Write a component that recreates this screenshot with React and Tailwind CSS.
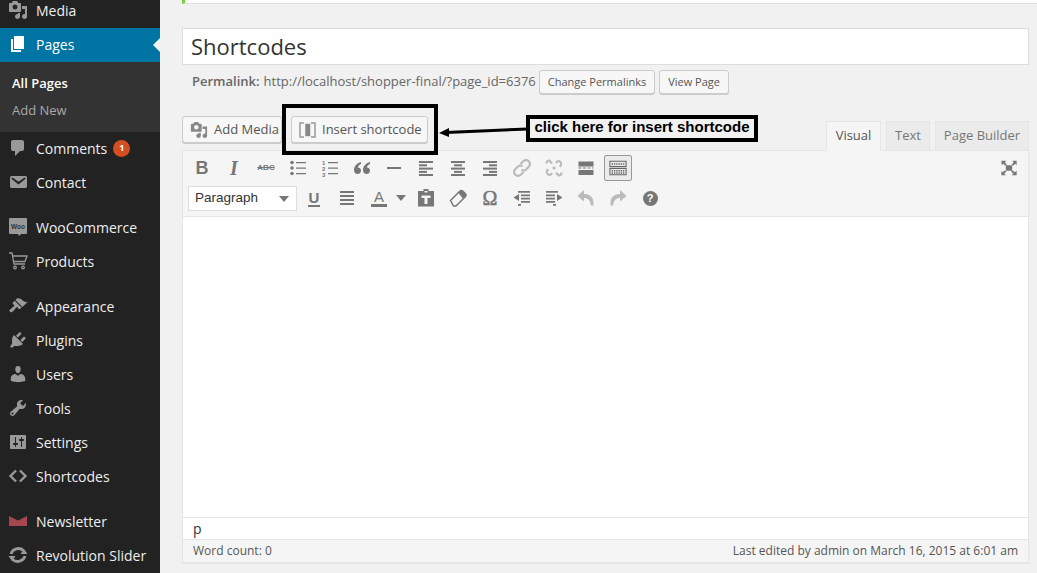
import React from "react";

const D = ({ d, className = "w-5 h-5 fill-[#999]" }) => (
  <svg viewBox="0 0 20 20" className={className}><path d={d} /></svg>
);

const paths = {
  media: "M13 11V4c0-.55-.45-1-1-1h-1.67L9 1H5L3.67 3H2c-.55 0-1 .45-1 1v7c0 .55.45 1 1 1h10c.55 0 1-.45 1-1zM7 4.500c1.380 0 2.500 1.120 2.500 2.500S8.380 9.500 7 9.500 4.500 8.380 4.500 7 5.620 4.500 7 4.500zM14 6h5v10.500c0 1.380-1.120 2.500-2.500 2.500S14 17.880 14 16.500s1.120-2.500 2.500-2.500c.17 0 .34.020.5.050V9h-3V6zm-4 8.050V13h2v3.500c0 1.380-1.120 2.500-2.500 2.500S7 17.880 7 16.500 8.120 14 9.500 14c.17 0 .34.020.5.050z",
  pages: "M6 15V2h10v13H6zm-1 1h8v2H3V5h2v11z",
  comments: "M5 2h9c1.100 0 2 .9 2 2v7c0 1.100-.9 2-2 2h-2l-5 5v-5H5c-1.100 0-2-.9-2-2V4c0-1.100.9-2 2-2z",
  contact: "M3.870 4h13.250C18.370 4 19 4.590 19 5.790v8.420c0 1.190-.63 1.790-1.880 1.790H3.870c-1.250 0-1.880-.6-1.880-1.790V5.790c0-1.200.63-1.790 1.880-1.790zm6.620 8.600l6.740-5.530c.24-.2.43-.66.13-1.070-.29-.41-.82-.42-1.170-.17l-5.700 3.860L4.800 5.830c-.35-.25-.88-.24-1.170.17-.3.410-.11.870.13 1.070z",
  appearance: "M14.480 11.060L7.410 3.990l1.500-1.500c.5-.56 2.300-.47 3.510.32 1.210.8 1.430 1.280 2.910 2.100 1.180.64 2.450 1.260 4.450.85zm-.71.71L6.700 4.700 4.930 6.470c-.39.39-.39 1.020 0 1.410l1.060 1.060c.39.39.39 1.030 0 1.420-.6.6-1.430 1.110-2.210 1.690-.35.26-.7.53-1.010.84C1.430 13.230.91 14.660 1.910 15.660c.99 1 2.420.48 3.770-.85.31-.31.58-.66.84-1.010.58-.78 1.090-1.610 1.690-2.210.39-.39 1.020-.39 1.410 0l1.060 1.060c.39.39 1.020.39 1.410 0z",
  plugins: "M13.110 4.360L9.870 7.600 8 5.730l3.240-3.240c.35-.34 1.050-.2 1.560.32.52.51.66 1.210.31 1.550zm-8 1.770l.91-1.120 9.010 9.010-1.190.84c-.71.71-2.630 1.160-3.820 1.160H6.140L4.900 17.260c-.59.59-1.540.59-2.120 0-.59-.58-.59-1.530 0-2.120l1.240-1.240v-3.880c0-1.130.4-3.190 1.090-3.890zm7.260 3.970l3.240-3.240c.34-.35 1.040-.21 1.550.31.52.51.66 1.210.31 1.550l-3.240 3.250z",
  users: "M10 9.250c-2.270 0-2.730-3.440-2.730-3.440C7 4.020 7.820 2 9.970 2c2.160 0 2.980 2.020 2.710 3.810 0 0-.41 3.440-2.680 3.440zm0 2.570L12.720 10c2.390 0 4.520 2.330 4.520 4.530v2.490s-3.650 1.130-7.240 1.130c-3.650 0-7.240-1.130-7.240-1.130v-2.490c0-2.250 1.940-4.480 4.470-4.480z",
  tools: "M16.680 9.770c-1.340 1.340-3.300 1.670-4.950.99l-5.410 6.520c-.99.99-2.590.99-3.580 0s-.99-2.590 0-3.570l6.520-5.420c-.68-1.650-.35-3.610.99-4.950 1.280-1.280 3.120-1.620 4.720-1.060l-2.890 2.890 2.820 2.820 2.860-2.870c.53 1.580.18 3.390-1.080 4.650zM3.810 16.210c.4.39 1.040.39 1.430 0 .4-.4.4-1.040 0-1.430-.39-.4-1.030-.4-1.430 0-.39.39-.39 1.030 0 1.430z",
  settings: "M18 16V4c0-.55-.45-1-1-1H3c-.55 0-1 .45-1 1v12c0 .55.45 1 1 1h14c.55 0 1-.45 1-1zM8 11h1c.55 0 1 .45 1 1s-.45 1-1 1H8v1.500c0 .28-.22.5-.5.5s-.5-.22-.5-.5V13H6c-.55 0-1-.45-1-1s.45-1 1-1h1V5.500c0-.28.22-.5.5-.5s.5.22.5.5V11zm5-2h-1c-.55 0-1-.45-1-1s.45-1 1-1h1V5.500c0-.28.22-.5.5-.5s.5.22.5.5V7h1c.55 0 1 .45 1 1s-.45 1-1 1h-1v5.500c0 .28-.22.5-.5.5s-.5-.22-.5-.5V9z",
};

const Shortcodes = () => (
  <svg viewBox="0 0 20 20" className="w-5 h-5 fill-none stroke-[#999] stroke-[2.400]"><path d="M8 4.500L2.500 10 8 15.500M12 4.500l5.500 5.500L12 15.500" /></svg>
);
const Woo = () => (
  <svg viewBox="0 0 20 20" className="w-5 h-5">
    <path d="M2 1h16a1 1 0 0 1 1 1v14a1 1 0 0 1-1 1h-5l-2 2-1-2H2a1 1 0 0 1-1-1V2a1 1 0 0 1 1-1z" fill="#999" />
    <text x="10" y="11.500" textAnchor="middle" fontSize="6.500" fontWeight="700" fill="#333" fontFamily="'Liberation Sans',sans-serif">Woo</text>
  </svg>
);
const Cart = () => (
  <svg viewBox="0 0 20 20" className="w-5 h-5 fill-none stroke-[#999] stroke-[1.300]">
    <path d="M1 2h3l2 11h11M5 5h14l-2 5.500H6" /><circle cx="7" cy="16.500" r="1.300" /><circle cx="15" cy="16.500" r="1.300" />
  </svg>
);
const Newsletter = () => (
  <svg viewBox="0 0 20 20" className="w-5 h-5"><path d="M1 5l9 4.500L19 5v10H1z" fill="#a5474e" /></svg>
);
const Rev = () => (
  <svg viewBox="0 0 20 20" className="w-5 h-5 fill-none stroke-[#999] stroke-[2.800]">
    <path d="M3 9A7.500 7 0 0 1 15.500 5.500M17 11A7.500 7 0 0 1 4.500 14.500" />
    <path d="M12.500 9h7l-3.500-5zM7.500 11h-7l3.500 5z" className="fill-[#999] stroke-none" />
  </svg>
);

const MenuItem = ({ icon, label, active, children }) => (
  <div className={`h-[34px] flex items-center pl-[8px] pb-[2px] text-[14px] ${active ? "bg-[#0074a2] text-white relative" : "text-[#eeeeee]"}`}>
    <span className="w-[28px] flex shrink-0">{icon}</span>
    <span className="whitespace-nowrap">{label}</span>
    {children}
  </div>
);

const Sidebar = () => (
  <aside className="w-[160px] shrink-0 bg-[#222222] h-full overflow-hidden flex flex-col">
    <div className="-mt-[6px]">
      <MenuItem icon={<D d={paths.media} />} label="Media" />
      <MenuItem active icon={<D d={paths.pages} className="w-5 h-5 fill-white" />} label="Pages">
        <span className="absolute right-0 top-[10px] border-y-[7px] border-y-transparent border-r-[7px] border-r-[#f1f1f1]" />
      </MenuItem>
      <div className="bg-[#333333] h-[70px] pl-[12px] pt-[8px] text-[13px]">
        <div className="h-[27px] leading-[26px] font-semibold text-white">All Pages</div>
        <div className="h-[26px] leading-[26px] text-[#a9a9a9]">Add New</div>
      </div>
      <MenuItem icon={<D d={paths.comments} />} label="Comments">
        <span className="ml-[6px] w-[17px] h-[17px] rounded-full bg-[#d54e21] text-white text-[9px] font-bold flex items-center justify-center">1</span>
      </MenuItem>
      <MenuItem icon={<D d={paths.contact} />} label="Contact" />
      <div className="mt-[11px]">
        <MenuItem icon={<Woo />} label="WooCommerce" />
        <MenuItem icon={<Cart />} label="Products" />
      </div>
      <div className="mt-[11px]">
        <MenuItem icon={<D d={paths.appearance} />} label="Appearance" />
        <MenuItem icon={<D d={paths.plugins} />} label="Plugins" />
        <MenuItem icon={<D d={paths.users} />} label="Users" />
        <MenuItem icon={<D d={paths.tools} />} label="Tools" />
        <MenuItem icon={<D d={paths.settings} />} label="Settings" />
        <MenuItem icon={<Shortcodes />} label="Shortcodes" />
      </div>
      <div className="mt-[11px]">
        <MenuItem icon={<Newsletter />} label="Newsletter" />
        <MenuItem icon={<Rev />} label="Revolution Slider" />
      </div>
    </div>
  </aside>
);

const Btn = ({ children, className = "" }) => (
  <button className={`h-[24px] px-[8px] pt-[1px] bg-[#f7f7f7] border border-[#cccccc] rounded-[3px] text-[11px] text-[#555555] shadow-[0_1px_0_#ccc] whitespace-nowrap ${className}`}>{children}</button>
);

const Lines = ({ rows }) => (
  <svg viewBox="0 0 20 20" className="w-5 h-5 fill-none stroke-[#777] stroke-[2]">
    {rows.map((r, i) => <path key={i} d={`M${r[0]} ${r[2]}H${r[1]}`} />)}
  </svg>
);

const I = {
  bold: <span className="font-['Liberation_Sans',sans-serif] font-bold text-[18px] text-[#777] leading-none">B</span>,
  italic: <span className="font-['Liberation_Serif',serif] font-bold italic text-[20px] text-[#777] leading-none">I</span>,
  strike: <span className="font-['Liberation_Sans',sans-serif] font-bold text-[8px] text-[#777] leading-none line-through">ABC</span>,
  bullets: (
    <svg viewBox="0 0 20 20" className="w-5 h-5 fill-[#777]">
      <circle cx="4" cy="4.500" r="1.800" /><circle cx="4" cy="10" r="1.800" /><circle cx="4" cy="15.500" r="1.800" />
      <path d="M8 4h10v1.300H8zM8 9.400h10v1.300H8zM8 14.900h10v1.300H8z" />
    </svg>
  ),
  numbers: (
    <svg viewBox="0 0 20 20" className="w-5 h-5 fill-[#777]">
      <text x="2" y="6.500" fontSize="6" fontWeight="700" fontFamily="'Liberation Sans',sans-serif">1</text>
      <text x="2" y="12.500" fontSize="6" fontWeight="700" fontFamily="'Liberation Sans',sans-serif">2</text>
      <text x="2" y="18.500" fontSize="6" fontWeight="700" fontFamily="'Liberation Sans',sans-serif">3</text>
      <path d="M8 4h10v1.300H8zM8 9.400h10v1.300H8zM8 14.900h10v1.300H8z" />
    </svg>
  ),
  quote: (
    <svg viewBox="0 0 20 20" className="w-5 h-5 fill-[#777]">
      <path d="M9 4C5 5 2 8 2 12c0 2 1.200 4 3.500 4S9 14.400 9 12.500 7.600 9.500 5.800 9.500C6 8 7.500 6.500 9 6zM18 4c-4 1-7 4-7 8 0 2 1.200 4 3.500 4s3.500-1.600 3.500-3.500-1.400-3-3.200-3c.2-1.500 1.700-3 3.200-3.500z" />
    </svg>
  ),
  hr: <Lines rows={[[3, 17, 10]]} />,
  left: <Lines rows={[[3, 17, 4], [3, 11, 7.300], [3, 17, 10.600], [3, 11, 13.900], [3, 17, 17]]} />,
  center: <Lines rows={[[3, 17, 4], [6, 14, 7.300], [3, 17, 10.600], [6, 14, 13.900], [3, 17, 17]]} />,
  right: <Lines rows={[[3, 17, 4], [9, 17, 7.300], [3, 17, 10.600], [9, 17, 13.900], [3, 17, 17]]} />,
  link: (
    <svg viewBox="0 0 20 20" className="w-5 h-5 fill-none stroke-[#bbb] stroke-[2.200]">
      <path d="M8.500 6l2.800-2.800a3.200 3.200 0 0 1 5.500 5.500L14 11.500a3.200 3.200 0 0 1-4.500 0M11.500 14l-2.800 2.800a3.200 3.200 0 0 1-5.500-5.500L6 8.500a3.200 3.200 0 0 1 4.500 0" />
    </svg>
  ),
  unlink: (
    <svg viewBox="0 0 20 20" className="w-5 h-5 fill-none stroke-[#bbb] stroke-[2.200]">
      <path d="M12 5l1-1.500a3 3 0 0 1 4 4L15.500 8.500M8 15l-1 1.500a3 3 0 0 1-4-4L4.500 11.500M2.500 5.500a3 3 0 0 1 3-3l2.500 3M17.500 14.500a3 3 0 0 1-3 3l-2.500-3M9 9l2 2M11 9l-2 2" />
    </svg>
  ),
  more: (
    <svg viewBox="0 0 20 20" className="w-5 h-5 fill-[#777]">
      <path d="M2.500 3.500h15v5h-15zM2.500 12h15v5h-15z" />
      <path d="M2.500 9.500h3v1h-3zM7 9.500h3v1H7zM11.500 9.500h3v1h-3zM16 9.500h1.500v1H16z" />
    </svg>
  ),
  kitchen: (
    <svg viewBox="0 0 20 20" className="w-[18px] h-[18px] fill-none stroke-[#666] stroke-[1.200]">
      <path d="M1 2.500h18v6H1zM1 10.500h18v7H1z" />
      <path d="M3 5.500h14M3 13h14M3 15.500h14" strokeDasharray="1.500 1" strokeWidth="1.600" />
    </svg>
  ),
  underline: (
    <span className="font-['Liberation_Sans',sans-serif] text-[15px] font-bold text-[#777] leading-none border-b-2 border-[#777] px-[1px]">U</span>
  ),
  justify: <Lines rows={[[3, 17, 4], [3, 17, 8], [3, 17, 12], [3, 17, 16]]} />,
  paste: (
    <svg viewBox="0 0 20 20" className="w-5 h-5 fill-[#777]">
      <path d="M7.500 1h5v2H18v15.500H2V3h5.500zM5.500 7.500v2.500h3V16h3v-6h3V7.500zM8.500 3v1.500h3V3z" fillRule="evenodd" />
    </svg>
  ),
  eraser: (
    <svg viewBox="0 0 20 20" className="w-5 h-5">
      <path d="M2.500 12.500L12 3c.8-.8 2-.8 2.700 0l2.800 2.800c.8.700.8 1.900 0 2.700L8 18l-2.500 0z" fill="#f5f5f5" stroke="#777" strokeWidth="1.500" />
      <path d="M10.500 5l4.500 5.800 2.500-2.300c.8-.8.8-2 0-2.700L14.700 3c-.7-.8-1.900-.8-2.700 0z" fill="#777" />
    </svg>
  ),
  omega: <span className="font-['Liberation_Serif',serif] text-[20px] text-[#777] leading-none [-webkit-text-stroke:0.5px_#777]">Ω</span>,
  outdent: (
    <svg viewBox="0 0 20 20" className="w-5 h-5 fill-[#777]">
      <path d="M6 3h12v1.700H6zM9 6.500h9v1.700H9zM9 9.700h9v1.700H9zM9 13h9v1.700H9zM6 16h3v1.700H6zM1.500 9.500L7 6v7z" />
    </svg>
  ),
  indent: (
    <svg viewBox="0 0 20 20" className="w-5 h-5 fill-[#777]">
      <path d="M2 3h12v1.700H2zM2 6.500h9v1.700H2zM2 9.700h9v1.700H2zM2 13h9v1.700H2zM9 16h3v1.700H9zM18.500 9.500L13 6v7z" />
    </svg>
  ),
  undo: (
    <svg viewBox="0 0 20 20" className="w-5 h-5">
      <path d="M8 2L1.500 8 8 13.500V10c4 0 6 2 7 7.500h2.500C18 10 15 6 8 6z" fill="#bbb" />
    </svg>
  ),
  redo: (
    <svg viewBox="0 0 20 20" className="w-5 h-5">
      <path d="M12 2l6.500 6L12 13.500V10c-4 0-6 2-7 7.500H2.500C2 10 5 6 12 6z" fill="#bbb" />
    </svg>
  ),
  help: (
    <span className="w-[15px] h-[15px] rounded-full bg-[#777] text-white text-[11px] font-bold flex items-center justify-center font-['Liberation_Sans',sans-serif]">?</span>
  ),
};

const Tool = ({ children, pressed }) => (
  <div className="w-[32px] h-[28px] shrink-0 flex items-center justify-center">
    {pressed ? (
      <div className="w-[28px] h-[26px] flex items-center justify-center bg-[#ebebeb] border border-[#999] rounded-[2px]">{children}</div>
    ) : children}
  </div>
);

const Tool2 = ({ children }) => (
  <div className="w-[32px] h-[24px] shrink-0 flex items-center justify-center">{children}</div>
);

const Editor = () => (
  <div className="mt-[6px] border border-[#e5e5e5] border-t-0 shadow-[0_1px_1px_rgba(0,0,0,0.04)]">
    <div className="bg-[#f5f5f5] h-[66px] border-t border-[#e5e5e5] relative pl-[3px] pt-[3px]">
      <div className="flex">
        <Tool>{I.bold}</Tool><Tool>{I.italic}</Tool><Tool>{I.strike}</Tool><Tool>{I.bullets}</Tool>
        <Tool>{I.numbers}</Tool><Tool>{I.quote}</Tool><Tool>{I.hr}</Tool><Tool>{I.left}</Tool>
        <Tool>{I.center}</Tool><Tool>{I.right}</Tool><Tool>{I.link}</Tool><Tool>{I.unlink}</Tool>
        <Tool>{I.more}</Tool><Tool pressed>{I.kitchen}</Tool>
        <div className="ml-auto mr-[10px] h-[28px] flex items-center">
          <svg viewBox="0 0 20 20" className="w-[18px] h-[18px] fill-[#777]">
            <path d="M6.500 7h7v6h-7zM1.500 2H7L5.300 3.700 7.500 6 6 7.500 3.700 5.300 2 7zM18.500 2v5l-1.700-1.700L14.500 7.500 13 6l2.300-2.300L13.500 2zM1.500 18v-5l1.700 1.700L5.500 12.500 7 14l-2.300 2.300L6.500 18zM18.500 18H13l1.800-1.700L12.500 14 14 12.500l2.300 2.300 2.200-1.800z" />
          </svg>
        </div>
      </div>
      <div className="flex items-start mt-[4px]">
        <div className="ml-[2px] w-[109px] h-[25px] bg-white border border-[#dddddd] flex items-center justify-between pl-[6px] pr-[7px] text-[#333333] font-['Liberation_Sans',sans-serif] text-[13.500px]">
          <span>Paragraph</span>
          <span className="border-x-[5px] border-x-transparent border-t-[6px] border-t-[#777]" />
        </div>
        <div className="w-[1px]" />
        <Tool2>{I.underline}</Tool2>
        <div className="w-[1px]" />
        <Tool2>{I.justify}</Tool2>
        <div className="w-[32px] h-[24px] shrink-0 flex items-center justify-center">
          <span className="font-['Liberation_Sans',sans-serif] text-[15px] text-[#777] leading-none border-b-[3px] border-[#777] px-[3px]">A</span>
        </div>
        <span className="border-x-[5px] border-x-transparent border-t-[6px] border-t-[#777] ml-[1px] mr-[4px] mt-[9px]" />
        <Tool2>{I.paste}</Tool2><Tool2>{I.eraser}</Tool2><Tool2>{I.omega}</Tool2><Tool2>{I.outdent}</Tool2>
        <Tool2>{I.indent}</Tool2><Tool2>{I.undo}</Tool2><Tool2>{I.redo}</Tool2><Tool2>{I.help}</Tool2>
      </div>
    </div>
    <div className="bg-white h-[301px] border-t border-[#e5e5e5]" />
    <div className="bg-white h-[22px] border-t border-[#e5e5e5] pl-[10px] text-[14px] leading-[21px] text-[#333333]">p</div>
    <div className="bg-[#f5f5f5] h-[23px] border-t border-[#e5e5e5] px-[10px] flex items-center justify-between text-[12px] text-[#555555]">
      <span>Word count: 0</span>
      <span>Last edited by admin on March 16, 2015 at 6:01 am</span>
    </div>
  </div>
);

export default function App() {
  return (
    <div className="w-[1037px] h-[573px] flex overflow-hidden bg-[#f1f1f1] font-['Open_Sans',sans-serif] relative">
      <Sidebar />
      <main className="flex-1 pl-[22px] pr-[8px] relative">
        <div className="h-[4px] bg-white border-l-[3px] border-l-[#7ad03a] border-b border-b-[#e0e0e0] -mr-[8px]" />
        <div className="mt-[24px] h-[37px] bg-white border border-[#dddddd] px-[8px] flex items-center text-[22px] text-[#333333]">Shortcodes</div>
        <div className="mt-[5px] h-[24px] flex items-center pl-[10px] text-[13px] text-[#666666] whitespace-nowrap">
          <strong className="font-semibold">Permalink:</strong>
          <span className="ml-[4px]">http://localhost/shopper-final/?page_id=6376</span>
          <Btn className="ml-[3px]">Change Permalinks</Btn>
          <Btn className="ml-[4px]">View Page</Btn>
        </div>
        <div className="mt-[22px] h-[33px] flex items-start justify-between">
          <div className="flex gap-[9px]">
            <button className="h-[27px] w-[100px] flex items-center pl-[7px] gap-[4px] bg-[#f7f7f7] border border-[#cccccc] rounded-[3px] shadow-[0_1px_0_#ccc] text-[13px] text-[#555555] whitespace-nowrap">
              <D d={paths.media} className="w-[18px] h-[18px] fill-[#888]" />
              <span className="ml-[2px]">Add Media</span>
            </button>
            <button className="h-[27px] w-[137px] flex items-center pl-[7px] gap-[6px] bg-[#f7f7f7] border border-[#cccccc] rounded-[3px] shadow-[0_1px_0_#ccc] text-[13px] text-[#555555] whitespace-nowrap">
              <svg viewBox="0 0 17 16" className="w-[17px] h-[16px] fill-none stroke-[#999] stroke-[1.500]">
                <path d="M5 1H1v14h4M12 1h4v14h-4" />
                <path d="M7 2.500h3.500v11H7z" className="fill-[#888] stroke-[#888]" />
              </svg>
              <span>Insert shortcode</span>
            </button>
          </div>
          <div className="flex mt-[5px] gap-[5px] text-[13px] mr-0">
            <div className="h-[30px] w-[55px] flex items-center justify-center bg-[#f5f5f5] border border-[#e5e5e5] border-b-[#f5f5f5] text-[#555555] relative z-10">Visual</div>
            <div className="h-[29px] w-[44px] flex items-center justify-center bg-[#ebebeb] border border-[#e5e5e5] border-b-0 text-[#777777]">Text</div>
            <div className="h-[29px] w-[94px] flex items-center justify-center bg-[#ebebeb] border border-[#e5e5e5] border-b-0 text-[#777777]">Page Builder</div>
          </div>
        </div>
        <div className="-mt-[5px]"><Editor /></div>
      </main>

      {/* annotations laid over the screenshot */}
      <div className="absolute left-[282px] top-[104px] w-[156px] h-[51px] border-[4px] border-black pointer-events-none" />
      <svg className="absolute left-[438px] top-[124px] w-[92px] h-[16px]" viewBox="0 0 92 16">
        <path d="M90 5L8 8.500" stroke="#000" strokeWidth="3" />
        <path d="M1 9l10-5 0 9z" fill="#000" />
      </svg>
      <div className="absolute left-[526px] top-[115px] w-[232px] h-[27px] border-[4px] border-black bg-[#f1f1f1] flex items-center justify-center pb-[2px] font-['Liberation_Sans',sans-serif] font-bold text-[15px] text-black whitespace-nowrap">click here for insert shortcode</div>
    </div>
  );
}
